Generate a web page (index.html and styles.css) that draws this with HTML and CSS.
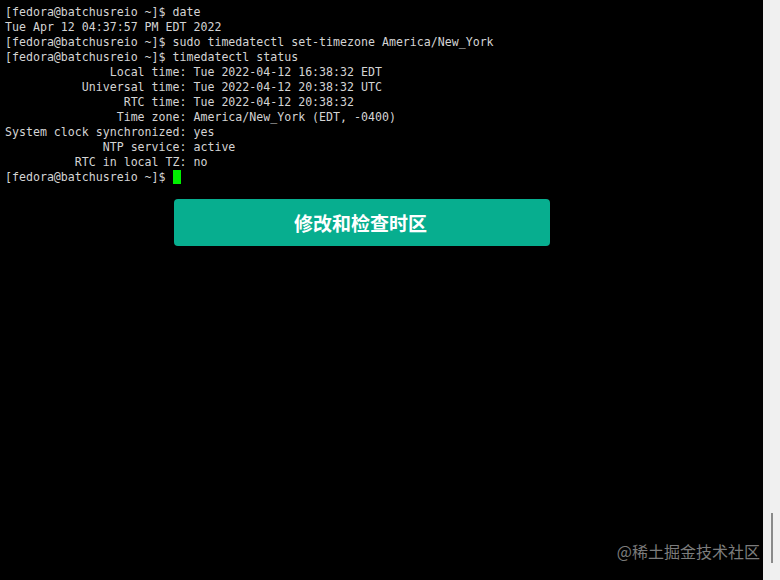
FILE: index.html
```html
<!DOCTYPE html>
<html lang="zh-CN">
<head>
<meta charset="utf-8">
<title>Terminal</title>
<link rel="stylesheet" href="styles.css">
</head>
<body>
<div class="window">
  <main class="terminal">
<pre class="output">[fedora@batchusreio ~]$ date
Tue Apr 12 04:37:57 PM EDT 2022
[fedora@batchusreio ~]$ sudo timedatectl set-timezone America/New_York
[fedora@batchusreio ~]$ timedatectl status
               Local time: Tue 2022-04-12 16:38:32 EDT
           Universal time: Tue 2022-04-12 20:38:32 UTC
                 RTC time: Tue 2022-04-12 20:38:32
                Time zone: America/New_York (EDT, -0400)
System clock synchronized: yes
              NTP service: active
          RTC in local TZ: no
[fedora@batchusreio ~]$ <span class="cursor"></span></pre>
    <div class="action-row">
      <div class="action">修改和检查时区</div>
    </div>
    <div class="watermark">@稀土掘金技术社区</div>
  </main>
  <aside class="scrollbar"><div class="thumb"></div></aside>
</div>
</body>
</html>
```

FILE: styles.css
```css
html, body {
  margin: 0;
  padding: 0;
  background: #000;
}
.window {
  display: flex;
  width: 780px;
  height: 580px;
}
.terminal {
  position: relative;
  flex: 1;
  background: #000;
  padding: 5px 0 0 5px;
}
.output {
  margin: 0;
  font-family: "DejaVu Sans Mono", monospace;
  font-size: 11.6px;
  line-height: 15px;
  color: #d4d4d4;
  white-space: pre;
}
.cursor {
  display: inline-block;
  width: 8px;
  height: 14px;
  background: #00f000;
  vertical-align: -3px;
}
.action-row {
  padding: 14px 0 0 169px;
}
.action {
  width: 376px;
  height: 47px;
  background: #07ae8f;
  border-radius: 4px;
  color: #fff;
  font-family: "Noto Sans CJK SC", sans-serif;
  font-weight: 700;
  font-size: 19px;
  display: flex;
  align-items: center;
  justify-content: center;
  padding-right: 3px;
  box-sizing: border-box;
}
.watermark {
  position: absolute;
  right: 3px;
  bottom: 17px;
  font-family: "Noto Sans CJK SC", sans-serif;
  font-size: 16px;
  color: #7c7c7c;
}
.scrollbar {
  width: 17px;
  background: #f0f0f0;
  position: relative;
}
.thumb {
  position: absolute;
  left: 8px;
  top: 513px;
  width: 2px;
  height: 50px;
  background: #8a8a8a;
}
```
